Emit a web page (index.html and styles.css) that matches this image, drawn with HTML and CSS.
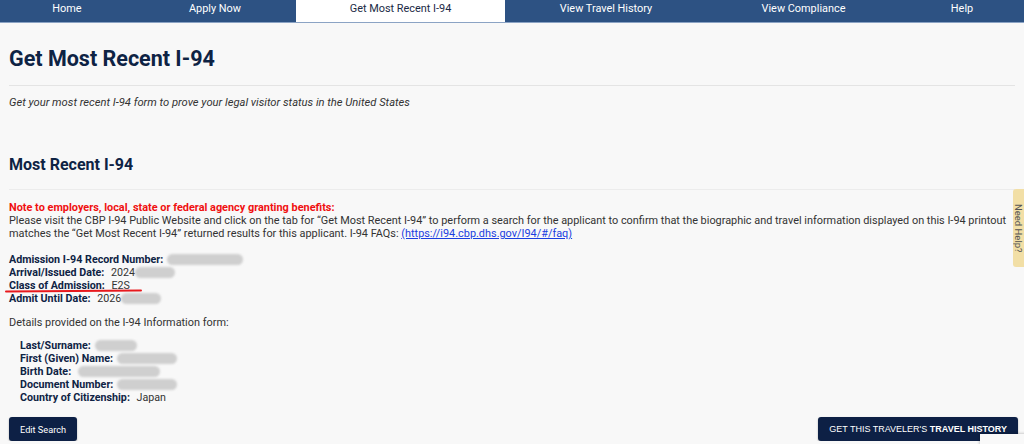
FILE: index.html
```html
<!DOCTYPE html>
<html>
<head>
  <title>Get Most Recent I-94</title>
  <link rel="stylesheet" href="styles.css">
</head>
<body>
  <nav class="topnav">
    <a href="#">Home</a>
    <a href="#">Apply Now</a>
    <a href="#" class="active">Get Most Recent I-94</a>
    <a href="#">View Travel History</a>
    <a href="#">View Compliance</a>
    <a href="#">Help</a>
  </nav>

  <div class="page">
    <h1>Get Most Recent I-94</h1>
    <p class="intro">Get your most recent I-94 form to prove your legal visitor status in the United States</p>

    <h2>Most Recent I-94</h2>

    <p class="note">
      <span class="warn">Note to employers, local, state or federal agency granting benefits:</span><br>
      Please visit the CBP I-94 Public Website and click on the tab for “Get Most Recent I-94” to perform a search for the applicant to confirm that the biographic and travel information displayed on this I-94 printout matches the “Get Most Recent I-94” returned results for this applicant. I-94 FAQs: <a href="#">(https://i94.cbp.dhs.gov/I94/#/faq)</a>
    </p>

    <div class="record">
      <div><b>Admission I-94 Record Number:</b><span class="blur w76"></span></div>
      <div><b>Arrival/Issued Date:</b> 2024<span class="blur w40"></span></div>
      <div class="marked"><b>Class of Admission:</b> E2S</div>
      <div><b>Admit Until Date:</b> 2026<span class="blur w40"></span></div>
    </div>

    <p class="details">Details provided on the I-94 Information form:</p>

    <div class="record inner">
      <div><b>Last/Surname:</b><span class="blur w42"></span></div>
      <div><b>First (Given) Name:</b><span class="blur w60"></span></div>
      <div><b>Birth Date:</b> <span class="blur w82"></span></div>
      <div><b>Document Number:</b><span class="blur w60"></span></div>
      <div><b>Country of Citizenship:</b> Japan</div>
    </div>

    <div class="actions">
      <button class="btn">Edit Search</button>
      <button class="btn caps">GET THIS TRAVELER'S <b>TRAVEL HISTORY</b></button>
    </div>
  </div>

  <div class="need-help">Need Help?</div>
  <div class="captcha">
    <svg width="24" height="10" viewBox="0 0 24 10">
      <path d="M4 10 C6 3 14 1 20 5 L20 10 Z" fill="#4a6fd8"/>
      <path d="M12 3 L18 3 L16 7 Z" fill="#1c3aa9"/>
    </svg>
  </div>
</body>
</html>
```

FILE: styles.css
```css
body {
  margin: 0;
  padding: 0;
  background-color: #f8f8f8;
  font-family: Roboto, "Liberation Sans", Arial, sans-serif;
  color: #333;
  overflow: hidden;
}

.topnav {
  display: grid;
  grid-template-columns: 134px 162px 209px 202px 193px 124px;
  height: 22px;
  background-color: #2d5283;
  border-bottom: 1px solid #8ba3c4;
}

.topnav a {
  color: #fff;
  text-decoration: none;
  text-align: center;
  font-size: 10.9px;
  line-height: 17px;
}

.topnav a.active {
  background-color: #fff;
  color: #1b2a45;
  border-bottom: 1px solid #fff;
}

.page {
  padding: 0 9px;
}

h1 {
  margin: 23px 0 0;
  padding-bottom: 14px;
  font-size: 21.5px;
  font-weight: 700;
  color: #0e2344;
  border-bottom: 1px solid #e4e4e4;
}

.intro {
  margin: 10px 0 0;
  font-size: 11.2px;
  font-style: italic;
  color: #333;
}

h2 {
  margin: 46px 0 0;
  padding-bottom: 15px;
  font-size: 16px;
  font-weight: 700;
  color: #0e2344;
  border-bottom: 1px solid #ececec;
}

.note {
  margin: 11px 0 0;
  font-size: 10.9px;
  line-height: 13px;
  color: #333;
}

.warn {
  color: #f01010;
  font-weight: 700;
}

.note a {
  color: #1a3ee0;
}

.record {
  margin-top: 13px;
  font-size: 10.7px;
  line-height: 13px;
  color: #333;
}

.record b {
  color: #0e2344;
  margin-right: 4px;
}

.blur {
  display: inline-block;
  height: 11px;
  vertical-align: -2px;
  background-color: #cfcfcf;
  border-radius: 6px;
  filter: blur(1.2px);
}

.w40 { width: 40px; }
.w42 { width: 42px; }
.w60 { width: 60px; }
.w76 { width: 76px; }
.w82 { width: 82px; }

.marked {
  position: relative;
}

.marked::after {
  content: "";
  position: absolute;
  left: -4px;
  top: 11px;
  width: 137px;
  height: 2px;
  background-color: #e8191d;
  border-radius: 1px;
  transform: rotate(-0.4deg);
}

.details {
  margin: 11px 0 0;
  font-size: 10.9px;
}

.record.inner {
  margin-top: 10px;
  padding-left: 11px;
}

.actions {
  display: flex;
  justify-content: space-between;
  margin-top: 13px;
}

.btn {
  height: 24px;
  padding: 0 11px;
  background-color: #0d2045;
  color: #fff;
  border: none;
  border-radius: 3px;
  font-family: inherit;
  font-size: 9.2px;
  box-shadow: 0 1px 2px rgba(0, 0, 0, 0.3);
}

.btn.caps {
  margin-right: -3px;
  font-family: "Liberation Sans", Arial, sans-serif;
  font-size: 9px;
}

.need-help {
  position: absolute;
  top: 189px;
  left: 1013px;
  width: 11px;
  height: 78px;
  background-color: #f2dfa6;
  border-radius: 3px 0 0 3px;
  writing-mode: vertical-rl;
  color: #555;
  font-size: 9.5px;
  line-height: 11px;
  text-align: center;
  overflow: hidden;
}

.captcha {
  position: absolute;
  top: 434px;
  left: 980px;
  width: 44px;
  height: 12px;
  background-color: #f9f9f9;
  box-shadow: 0 0 3px rgba(0, 0, 0, 0.3);
  padding: 2px 0 0 4px;
}
```
